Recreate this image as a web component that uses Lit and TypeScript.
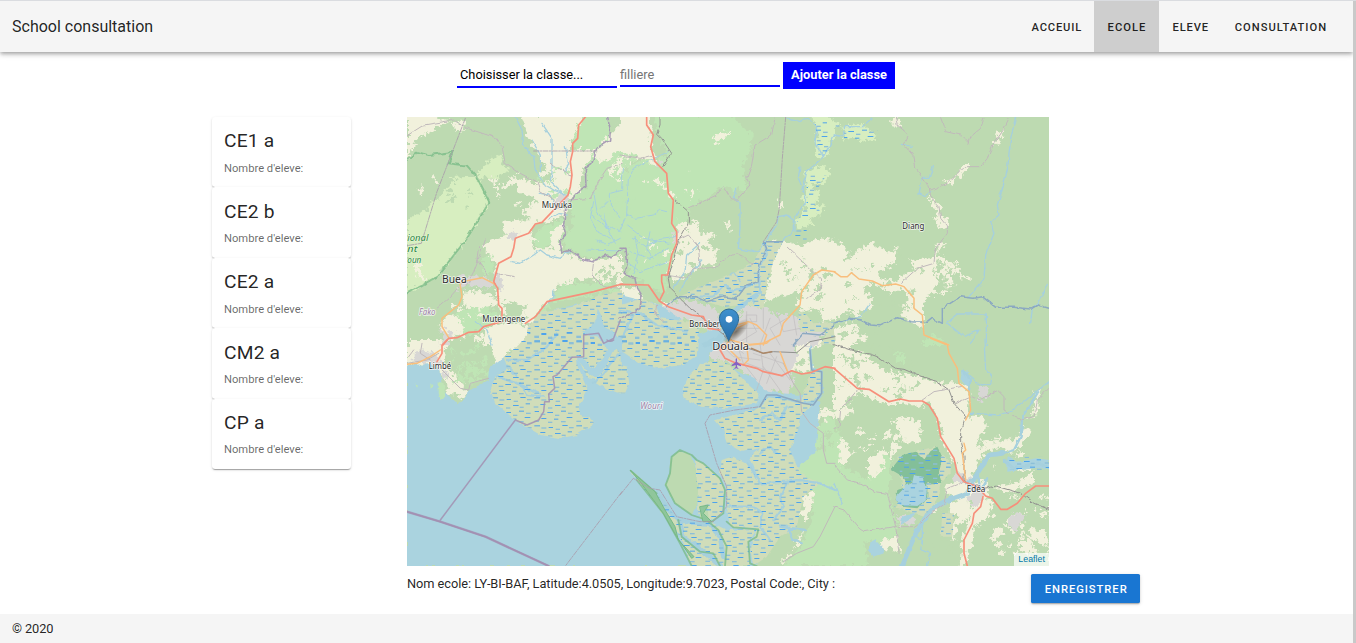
import { LitElement, html, css, svg } from "lit";
import { customElement, property } from "lit/decorators.js";

// Map geometry is expressed in sheets: six survey sheets on one 1935 x 1365 canvas.
type Sheet = "A" | "B" | "C" | "D" | "E" | "F";
const ORIGIN: Record<Sheet, [number, number]> = {
  A: [0, 0], B: [639, 0], C: [1281, 0], D: [0, 675], E: [639, 675], F: [1281, 675],
};
type Shape = [Sheet, string, string];

const land: Shape[] = [
  // light woodland
  ["A", "grass", "M500 0H605L608 70 570 110 500 110ZM535 90L645 70V420L545 430 480 400 465 370 495 330 490 250 540 215ZM400 340L470 310 460 380 400 400 370 380ZM360 620L420 560 470 505 640 500 640 530 430 560 400 620ZM225 430L255 410 262 480 230 480ZM130 610L205 560 270 590 275 620 180 660 130 650Z"],
  ["B", "grass", "M100 0H330L400 60 370 160 380 230 310 215 205 280 205 320 165 330 175 380 145 470 135 540 70 500 25 480 20 400 0 390V180L60 140 145 120 130 90Z"],
  ["E", "grass", "M520 290L600 240 645 230V678H490L540 620 575 540 580 450 520 420Z"],
  ["F", "grass", "M0 270L30 300 25 380 100 420 110 350 150 330 175 360 165 460 190 570 180 600 140 610 90 600 100 678H0ZM180 40L215 40 210 65 185 70ZM160 130L200 110 230 140 180 145Z"],
  ["C", "grass", "M290 660L320 665 340 690H260Z"],
  // heath of the park
  ["A", "heath", "M0 320L20 300 60 290 70 255 100 250 110 220 150 200 120 190 190 185 210 195 247 262 180 370 90 485 0 535ZM230 155L270 120 285 125 280 145 312 165 260 190 200 185Z"],
  ["B", "heath", "M580 0H620L645 20 645 60 630 80 625 120 600 135 585 110 590 60ZM555 170L590 150 630 165 625 195 575 210 600 235 585 270 615 275 600 300 570 310 580 330 530 340 525 315 560 280 545 240 560 215Z"],
  ["C", "heath", "M0 20L20 25 15 40 0 35ZM28 35L60 28 95 32 110 48 130 60 120 75 90 78 60 65 35 75 30 60Z"],
  // cleared ground
  ["A", "field", "M0 0H50L135 18 90 35 25 80 15 105 0 130ZM135 20L175 20 170 45 150 50ZM345 0H525L505 60 495 80 495 105 565 105 530 160 515 235 480 250 475 300 430 318 380 323 350 300 355 280 400 255 330 230 330 200 300 220 280 210 320 190 390 205 440 195 395 120 360 60ZM285 320L375 315 390 330 365 350 395 380 370 380 380 400 440 400 430 350 475 325 455 380 470 415 560 440 645 420V515L580 500 545 490 450 510 430 555 400 580 375 625 350 625 355 600 330 620 360 570 290 560 300 620 280 605 268 500 268 440 230 400 235 385 300 360 290 345ZM105 615L130 600 155 605 170 650 120 665 100 640ZM170 530L210 525 265 545 270 570 210 585 165 570ZM230 640L310 620 375 640 355 690H230L225 660ZM40 205L48 215 45 240 38 240ZM75 180L100 205 95 215 78 195ZM15 430L45 445 35 460 55 495 30 490ZM605 60L645 20V100L640 200 600 180 620 130 580 140 560 120Z"],
  ["B", "field", "M0 0H85L90 30 95 100 110 150 50 130 0 180ZM275 70L300 50 335 55 300 75 290 90ZM175 320L240 330 245 360 275 350 285 360 260 380 290 400 290 450 240 455 200 480 160 500 145 470 160 440 170 400 160 380ZM310 325L330 320 325 350ZM478 255L490 260 485 280 475 278ZM430 380L490 380 540 390 600 370 645 375V610L610 620 600 580 550 590 530 570 540 530 490 540 430 560 450 490ZM0 520L50 515 65 560 20 570 0 560ZM100 570L140 560 200 600 170 610 110 600ZM520 640L570 625 590 660 540 680 510 665Z"],
  ["C", "field", "M0 380L30 390 40 410 60 425 75 400 120 385 165 415 195 395 185 430 170 455 130 465 140 490 190 500 210 480 240 465 230 440 275 430 300 430 310 380 340 390 310 410 310 450 295 480 310 495 300 510 310 540 290 530 270 560 270 610 260 640 200 600 195 580 225 560 205 520 170 535 130 515 110 500 95 535 125 570 85 590 70 580 85 610 30 590 0 625ZM285 240L305 260 325 270 320 290 345 330 330 340 300 315 315 300 290 260ZM185 10L200 25 190 35 165 25ZM488 48L508 45 495 85 475 93 485 70ZM325 200L360 190 385 150 410 150 380 185 350 205ZM330 440L345 435 365 460 350 460ZM335 480L355 480 350 520 335 520ZM370 475L410 485 410 490 385 490ZM0 640L60 625 100 670 70 690 0 690Z"],
  ["D", "field", "M0 0H100L115 20 110 70 125 85 175 145 180 185 150 165 120 160 115 115 90 90 0 75ZM240 0H360L350 20 300 35 290 70 265 75 260 35Z"],
  ["E", "field", "M520 0H620L560 40 580 80 570 95 500 90 520 60 535 40ZM535 200L560 180 600 210 640 205 645 220 590 260 580 290 550 270 560 240 535 225ZM550 470L580 450 575 500 560 540 530 520 550 510ZM490 655L520 625 550 570 540 610 510 640 490 678Z"],
  ["F", "field", "M0 0H40L50 30 100 45 125 70 150 90 190 100 250 110 330 130 370 130 395 130 405 170 400 230 455 230 455 270 430 300 430 320 450 330 425 380 415 430 455 420 465 470 475 510 450 540 420 560 415 610 390 678H380L385 600 400 550 420 490 350 470 330 440 370 420 370 380 320 300 320 260 310 230 290 190 230 200 210 190 160 195 70 160 40 190 60 215 10 240 0 220ZM440 300L480 310 540 300 575 260 590 275 560 320 530 340 500 320 460 330ZM605 150L620 145 610 220 570 240 600 220ZM20 290L50 330 40 370 15 380ZM175 240L215 230 260 250 260 300 245 310 200 290ZM170 300L200 315 190 340 170 330ZM105 350L150 330 145 390 115 420 100 400ZM140 600L190 590 200 640 170 620 130 640ZM350 490L395 470 415 520 370 560 365 600 340 590ZM480 440L540 430 600 400 600 430 520 460ZM475 570L510 560 510 580 480 600ZM550 600L590 600 600 620 580 645 560 630ZM580 560L610 570 640 570 630 620 600 600ZM270 490L320 500 300 520 270 510Z"],
];

const town = [
  ["A", "M155 480L225 485 260 500 250 525 190 510 155 525ZM300 355L335 350 330 372 300 375ZM262 470L285 500 290 525 268 515ZM455 235L485 240 470 285 440 280ZM100 640L135 655 130 690H105ZM360 625L390 640 388 655 365 645Z"],
  ["B", "M110 580L180 555 260 570 305 600 300 640 275 650 230 620 165 605 110 605ZM355 600L370 575 420 570 470 600 520 600 560 635 600 625 615 650 590 690H300L330 670ZM95 90L105 130 125 150 110 155ZM160 350L175 345 170 390 158 385Z"],
  ["D", "M20 35L55 30 95 50 110 75 90 80 50 65 20 70ZM105 90L120 95 125 120 110 110Z"],
  ["E", "M300 0H520L530 70 510 95 525 130 500 165 470 150 440 160 420 165 385 145 400 120 370 100 350 80 310 60 260 55 270 35Z"],
  ["F", "M358 400L385 400 430 430 445 440 450 475 425 505 400 480 415 460 395 430 355 430ZM430 145L455 138 470 155 460 175 430 185 440 165ZM190 525L215 530 240 530 245 545 215 555 190 550ZM525 535L550 515 575 525 545 575 525 560Z"],
] as [Sheet, string][];

const sea = "M0 750L70 748 100 765 105 825 155 868 190 825 245 795 250 760 265 745 300 720 360 690 380 640 410 590 640 540 760 570 880 655 925 640 965 660 945 690 905 720 900 760 960 750 1040 790 1080 830 1180 840 1240 860 1225 1010 1100 1130 1050 1353H0Z";

const marsh: Shape[] = [
  ["A", "marsh", "M360 645L400 590 500 575 600 535 645 528V690H360Z"],
  ["B", "marsh", "M0 570L70 550 110 575 120 610 210 620 240 645 220 690H0ZM180 545L230 520 330 480 400 445 430 380 490 378 460 440 440 510 430 580 370 570 310 575 260 560ZM535 590L560 600 580 625 640 620 645 690H600L620 650 540 650Z"],
  ["D", "marsh", "M365 -20L640 -20 645 0 600 -10 640 40 645 160 600 150 570 130 560 115 540 110 510 50 512 80 542 150 515 200 520 225 545 230 562 250 510 285 460 295 400 285 325 240 265 190 250 150 265 110 300 85 290 50 330 20Z"],
  ["E", "marsh", "M0 -10H235L230 50 190 75 110 85 60 70 30 50 0 30ZM0 75L20 80 28 130 15 160 0 160ZM240 75L300 60 330 75 380 130 420 165 410 190 320 205 240 200 190 175 187 150 205 110ZM285 240L400 210 425 200 440 165 545 180 575 95 605 95 605 160 560 210 540 230 535 270 510 330 540 400 600 430 550 470 530 560 480 590 440 650 400 678 390 620 415 565 330 560 320 500 320 440 300 400 305 360 340 350 385 375 420 430 390 350 420 325 365 335 320 310 310 270ZM32 392L60 415 110 460 175 540 270 545 320 570 410 568 385 610 390 678H215L180 590 130 520 50 420Z"],
  ["E", "marsh", "M225 360L260 375 298 415 313 450 308 520 275 540 235 520Z"],
  ["F", "marsh", "M190 350L300 320 350 370 350 400 320 430 310 480 270 530 180 500 210 470ZM325 520L360 520 355 590 320 590Z"],
];

const waters: Shape[] = [
  ["A", "w3", "M325 6L345 45 350 90 380 125 385 165 415 210 440 225 475 240M405 25L435 70 435 175 430 200 470 240M375 75L400 120 400 170M475 95L485 150 470 170M315 440L340 445 380 420 400 405 420 420 460 430 490 405M410 575L440 550 440 525M205 620L240 645 255 690M425 312L455 295 480 300M400 235L425 240 440 260"],
  ["A", "w2", "M560 230L570 290 600 330 640 350M555 300L600 340 625 385M560 260L550 310 570 350 610 370M570 375L600 390 640 370M540 405L645 408M645 225L610 235 610 270 640 310M580 280L600 260"],
  ["B", "w2", "M145 110L80 140 40 160 25 190 20 300 45 310 100 300 120 285 140 290M20 330L70 370 150 385M40 370L75 395 120 370 165 365M30 410L90 430 145 400M20 440L60 470 140 440M45 365L55 420 40 475M90 350L80 400 100 430M10 160L5 220M0 345L20 300"],
  ["B", "w3", "M350 220L340 250 360 265 360 340 355 400 400 410 420 405 435 380 470 330 475 305 500 300 520 315 520 345 490 380 465 380M645 60L610 125 560 170 550 220 555 260 525 310 525 350M540 155L535 190 550 225M240 385L200 420 195 470 160 520M245 435L200 490 180 530M360 500L340 470 330 480M500 6L540 20 560 8 590 35 585 80 610 125"],
  ["B", "w6", "M435 380L440 420 415 460 420 530 400 560M225 545L280 545 315 510 340 530 420 500M0 585L60 595 110 630 200 650M40 600L10 660"],
  ["B", "w16", "M255 690L300 670 340 590 410 540"],
  ["C", "w3", "M545 6L530 70 520 165 505 220 490 270 495 300 470 320 480 355 455 420 450 490 440 505 405 545M298 155L285 190 265 190 255 235 270 245 290 230M205 88L235 95M640 505L620 550 595 580 590 625M340 620L370 597H457V690M340 625L390 665 435 645 410 685M0 625L80 605 105 570"],
  ["C", "w3", "M0 60L30 65 28 35 85 35 115 8"],
  ["D", "w6", "M300 60L360 60 420 20 450 -20M270 110L330 130 400 160M300 80L330 110M640 40L610 70 590 100 560 130M340 130L360 165 410 170"],
  ["E", "w6", "M400 210L445 165 480 170 545 190 585 185 605 160V95L575 85 570 20M385 370L420 430 500 425 540 420 600 430 645 450M420 240L455 220 480 240 500 200M420 340L450 320 470 340M325 500L400 500 430 520 420 560 450 600M500 430L480 470 490 500 460 540M480 560L555 570M500 560L520 600 545 610"],
  ["E", "w16", "M110 460L140 505 180 545 190 590 250 635 300 678M180 545L265 550 300 590 310 650"],
  ["F", "w3", "M450 0L455 90 475 110 470 130 440 135 400 100M410 220L500 225 545 205 645 125M240 590L265 600 260 630 290 640 280 678M0 430L25 490M265 560L265 610"],
  ["F", "w16", "M205 678L230 615 250 570 290 510 330 485 400 460 430 400 465 345 505 340"],
  ["F", "w6", "M505 340L540 330 560 290 565 230 610 160M510 360L540 385 620 370 645 385M385 90L410 120 405 150M395 430L430 400 440 450 460 415"],
];

const lakes: Shape[] = [
  ["A", "sea", "M590 290L600 330 610 345 595 340Z"],
  ["F", "reserve", "M205 345L245 335 270 360 290 330 310 320 325 350 315 400 325 430 280 430 280 475 250 505 205 500 185 480 190 450 220 440 205 410 170 390Z"],
  ["F", "sea", "M215 435L235 425 240 405 265 410 270 430 280 440 275 480 250 498 195 495 185 470 205 450ZM110 605L125 598 145 620 150 640 120 650 105 635ZM380 90L400 95 410 110 405 140 385 130ZM205 530L250 515 225 540 200 555ZM520 350L550 365 610 355 645 360V385L600 385 560 390 520 395Z"],
  ["E", "wood", "M180 330L215 345 225 380 235 450 230 500 215 525 165 490 137 435 150 400 155 350ZM240 500L265 500 270 540 240 540Z"],
];

// Open lagoon inside the reed beds, free of reed marks.
const lagoons: Shape[] = [
  ["A", "sea", "M572 580L582 600 590 635 620 650 640 672 645 690H590L575 665 545 660 525 650 555 635 568 610Z"],
  ["D", "sea", "M590 0L645 -5V40L625 25 610 55 590 90 570 115 545 100 512 60 512 45 535 60 555 85 585 60 600 30Z"],
];

const lines: Shape[] = [
  ["A", "reserve-line", "M0 135L15 128 28 110 65 120 137 111 125 145 180 152 208 184 247 262 180 370 90 485 0 535"],
  ["E", "reserve-line", "M180 330L215 345 230 360 250 370 300 415 315 450 310 520 275 545 215 525 165 490 137 435 150 400 155 350ZM32 392L110 460M50 420L130 520 180 610 215 678M175 540L185 590 240 635 280 640 300 678M265 545L295 570 320 620 315 678M320 545L340 562 415 568 410 590 385 605 390 670 410 678"],
  ["E", "fill-line", "M32 392L50 408 105 455 135 510 165 560 175 600 222 650 215 655 170 590 130 520 60 425ZM240 500L265 495 250 520 275 545 250 545Z"],
  ["A", "track", "M0 62L50 30 140 15 175 38 265 68 285 95 295 145 345 178 390 200 400 230 450 260M490 255L550 250 580 190 600 160 645 145M235 375L200 470 180 510M215 395L210 430 240 480M265 475L325 485M165 505L130 545 90 580M560 440L555 480 590 515 640 520M430 145L490 180"],
  ["B", "track", "M0 120L60 130 100 120M465 8L455 60 405 90 395 150 380 190 390 210 350 255 335 255 310 215 290 240 205 280M135 480L200 490 220 460 290 458 300 440 350 415 370 425 395 450 415 440M175 375L205 360 235 395 240 450M500 395L590 480 605 495 600 525 560 550M110 570L105 600 130 620"],
  ["C", "track", "M185 6L190 30 225 60 210 90 240 125 245 160 285 215 290 245 315 275 320 310 340 335 340 355 305 400 300 445 250 460 200 505M290 225L340 205 390 155 440 155 460 130 480 85 505 50 525 10M320 8L335 50 380 60 405 85 410 65 440 40 450 10"],
  ["D", "track", "M0 70L60 60 95 40M70 60L40 40 45 10M105 90L160 145 185 150 190 130 245 115M20 30L5 50"],
  ["E", "track", "M490 70L520 130 540 160 545 215 570 250 610 280 610 330 620 370 645 370M645 500L600 590 580 620 530 640 490 665"],
  ["F", "track", "M0 265L15 260 20 210 70 150M0 375L40 420 80 430 120 455 160 460 185 560 240 560 260 545M0 500L30 510 75 565 90 575 180 560M185 560L195 640M265 180L300 155 380 140M365 190L410 170 440 180 490 150 510 170 510 210 560 240 600 230 610 180 645 145M260 550L290 520 330 490 340 445 390 425"],
  ["B", "street", "M380 600H410V620H380ZM430 580V640M450 610L420 690M500 610L450 640 480 690M390 610L410 650 360 680M470 590L490 650 540 640M520 600L530 660M355 640L420 640M380 590V680"],
  ["E", "street", "M310 20L340 50 420 60M350 10L370 70 410 120M400 40L490 70M420 10L430 90 410 150M450 40L510 120M470 50L440 130M380 70L490 110M430 80L480 150M320 0L370 40"],
  ["B", "rail", "M120 6V30L110 55 125 70 155 115 125 160M160 250L205 290 205 325 175 380 145 490 150 520 210 580 300 650 350 690"],
  ["E", "rail", "M385 25L430 40 460 35 530 38 570 5 645 -10"],
  ["F", "rail", "M0 14L50 30 110 43 130 50 185 85 210 88 250 105 310 125 345 150 360 190 395 230 380 280 380 310 390 350 390 425 450 445 485 438 560 460 600 490 645 508"],
  ["A", "border-dash", "M175 10L90 230 43 385 0 392M380 108H570"],
  ["B", "border-dash", "M497 6L487 130 478 280 470 320 430 380"],
  ["A", "border", "M602 6L610 45 608 75 570 100 555 145 535 160 537 215 505 238 490 265 475 285 470 330 478 355 458 375 465 412 490 405 530 435 555 440 600 420 610 430 645 405"],
  ["B", "border", "M0 400L18 400 22 440 15 480 45 490 50 520 65 545 60 580 45 590 0 610"],
  ["B", "border-soft", "M140 575L170 545 225 545 260 560 310 545 350 550 380 510 415 500 415 460 440 400 430 380 490 380M520 690L550 655 600 660 645 630"],
  ["C", "border-soft", "M0 625L50 610 80 615 110 630 140 632 190 608 230 620 280 622 295 610 325 625 325 580 380 545 420 550 445 545 485 577 540 577 590 582 610 570 645 580"],
  ["D", "border", "M640 -60L620 -5 590 10 575 -20 530 -15V50L495 52 450 105 438 110 443 145 425 162 427 185 413 185 410 215 395 240 360 255 325 240 100 540M0 515L100 545 235 590 425 678M600 0Q610 8 620 0"],
  ["D", "thick-border", "M0 515L100 545 235 590 425 678"],
  ["D", "border-dash", "M645 455L475 678"],
  ["E", "border-dash", "M0 465L40 415 90 445 120 450 170 530 240 545 280 545 320 500V440L290 370 255 250 270 225 345 210 420 200 440 165"],
  ["E", "border-soft", "M420 200L440 165 470 165 550 190 580 195 605 160V95L575 90 570 30"],
];

const roads: Shape[] = [
  ["A", "orange", "M165 500L225 488 265 508M158 500L165 545 155 570 105 610 105 635 125 668"],
  ["B", "orange", "M325 680L350 630 385 620 410 630 440 660 430 690M370 690L430 685 480 660 490 625 540 570 545 530 580 480 605 465 645 470M330 650L380 625"],
  ["C", "orange", "M0 470L20 485 40 485 52 473 75 492 115 498 145 512 185 507 210 515 240 550 240 580 265 600 270 660 345 690"],
  ["D", "orange", "M0 73L30 70 70 50 100 30"],
  ["E", "orange", "M305 30L330 0 390 15 440 10 450 0M380 15L385 60 370 75M480 35L503 95M320 20L360 60"],
  ["F", "orange", "M290 -5L340 15 345 40 370 85 375 130 405 155 410 210 395 240M390 310L395 330 385 340 395 420"],
  ["A", "trunk", "M535 6L515 30 512 70 497 85 497 110 490 140 495 180 490 215 483 240 405 322 385 327 365 355 325 370 320 400 312 425 275 445 260 500 272 520 275 570 285 580 285 605M285 620L230 635 215 650 185 652 150 668 125 670 108 690M355 625L385 605 420 560 560 530 645 507"],
  ["B", "trunk", "M80 6V30L100 60 92 95 105 140 140 175 145 235 160 255 155 325 170 350 170 385 155 420 143 480 125 480 125 500 132 530 118 558 145 575 215 600 250 605 265 640 300 645M0 508L85 510 118 558"],
  ["D", "trunk", "M120 0L105 15 105 40 90 65"],
  ["E", "trunk", "M310 12L300 30 315 55 345 68 410 85 430 95 485 107 515 92 545 102 575 97 615 80 645 85"],
  ["F", "trunk", "M0 85L70 145 105 148 165 185 200 177 225 183 265 183 285 195 310 235 320 290 360 355 370 400 390 425 430 440 455 468 475 475 500 508 520 508 550 490 575 460 605 438 645 438M447 470L440 500 420 520 415 550 390 600 390 640 400 678"],
  ["E", "brown", "M395 25L430 40 455 35"],
];

const labels: [Sheet, number, number, number, number, string, string][] = [
  ["A", 404, 278, 91, 28, "town", "Muyuka"],
  ["A", 105, 505, 74, 33, "town", "Buea"],
  ["A", 226, 621, 129, 28, "town", "Mutengene"],
  ["A", 36, 600, 49, 25, "region", "Fako"],
  ["A", 1, 377, 63, 27, "park", "ional"],
  ["A", 1, 411, 30, 27, "park", "nt"],
  ["A", 1, 445, 42, 27, "park", "oun"],
  ["B", 208, 636, 98, 27, "town", "Bonaberi"],
  ["C", 205, 342, 66, 27, "town", "Diang"],
  ["D", 65, 87, 67, 27, "town", "Limbé"],
  ["E", 277, 30, 110, 35, "town", "Douala"],
  ["E", 61, 207, 66, 25, "region", "Wouri"],
  ["F", 398, 457, 56, 27, "town", "Edéa"],
];

// Scattered clearings and thickets: [x, y, width, height, count, class]
const scatter: [number, number, number, number, number, string][] = [
  [600, 110, 70, 230, 70, "grass"], [1310, 400, 230, 200, 34, "wood"], [1290, 700, 240, 210, 48, "wood"],
  [1290, 620, 120, 130, 18, "wood"], [1560, 420, 90, 110, 22, "field"], [1740, 1090, 190, 240, 42, "field"],
  [1560, 1210, 90, 130, 12, "wood"], [800, 320, 150, 130, 16, "wood"], [130, 690, 110, 110, 34, "grass"],
  [1120, 430, 130, 130, 20, "wood"], [1160, 740, 90, 90, 16, "wood"], [380, 140, 100, 110, 12, "grass"],
  [250, 170, 160, 130, 16, "field"], [1650, 960, 240, 100, 16, "field"], [560, 450, 90, 100, 20, "wood"],
  [1170, 860, 110, 140, 20, "wood"], [1290, 950, 230, 90, 16, "field"], [690, 160, 180, 300, 18, "field"],
  [100, 560, 120, 110, 14, "field"], [0, 190, 180, 130, 8, "wood"],
];

function scatterPaths() {
  let seed = 20;
  const rnd = () => (seed = (seed * 16807) % 2147483647) / 2147483647;
  return scatter.map(([x, y, w, h, n, cls]) => {
    let d = "";
    for (let i = 0; i < n; i++) {
      const cx = x + rnd() * w, cy = y + rnd() * h, r = 3 + rnd() * 8;
      d += `M${cx.toFixed(0)} ${cy.toFixed(0)}l${(r * 1.3).toFixed(0)} ${(-r).toFixed(0)} ${r.toFixed(0)} ${(r * 0.6).toFixed(0)} ${(-r * 0.4).toFixed(0)} ${r.toFixed(0)} ${(-r * 1.2).toFixed(0)} ${(r * 0.5).toFixed(0)}z`;
    }
    return svg`<path class=${cls} d=${d}></path>`;
  });
}

const place = (s: Sheet) => `translate(${ORIGIN[s][0]} ${ORIGIN[s][1]})`;
const draw = (list: Shape[]) =>
  list.map(([s, cls, d]) => svg`<path class=${cls} transform=${place(s)} d=${d}></path>`);

@customElement("region-map")
class RegionMap extends LitElement {
  static styles = css`
    :host { display: block; position: relative; width: 642px; height: 449px; overflow: hidden; }
    svg { display: block; width: 642px; height: 449px; background: #bddab1; }
    path { fill: none; stroke-linejoin: round; stroke-linecap: round; }
    .wood { fill: #bddab1; }
    .grass { fill: #bfe5b5; }
    .heath { fill: #d7eec0; }
    .field { fill: #f1f1dc; }
    .built { fill: #d8d7d5; }
    .sea { fill: #aad3df; }
    .marsh { fill: #d0ddba; }
    .dashes { fill: url(#reeds); }
    .reserve { fill: #83bf99; }
    .w2, .w3, .w6, .w16 { stroke: #a6d0dd; stroke-width: 3; }
    .w3 { stroke-width: 4; }
    .w6 { stroke-width: 7; }
    .w16 { stroke-width: 14; }
    .reserve-line { stroke: #77b985; stroke-width: 5.5; opacity: .75; }
    .fill-line { fill: #8fc69b; stroke: #77b985; stroke-width: 3; }
    .track { stroke: #c0b9bb; stroke-width: 3; }
    .street { stroke: #bfbdbe; stroke-width: 2; }
    .rail { stroke: #929290; stroke-width: 3; }
    .border { stroke: #a394b4; stroke-width: 4.5; opacity: .9; }
    .thick-border { stroke: #a28baf; stroke-width: 7; opacity: .7; }
    .border-soft { stroke: #8ca9c1; stroke-width: 4.5; }
    .border-dash { stroke: #a99bab; stroke-width: 2.5; stroke-dasharray: 15 4 5 4; }
    .trunk { stroke: #f78f7b; stroke-width: 5; }
    .orange { stroke: #f9be7c; stroke-width: 4.4; }
    .brown { stroke: #ad8867; stroke-width: 4.4; }
    text { font-family: "Noto Sans", sans-serif; paint-order: stroke; stroke: rgba(255,255,255,.75); stroke-width: 5px; stroke-linejoin: round; }
    .town { fill: #2b2b2b; }
    .region { fill: #9c82a8; font-style: italic; }
    .park { fill: #278539; font-style: italic; stroke-width: 2px; }
    .plane { fill: #8461c4; }
    .pin { fill: url(#pin-blue); stroke: #2e6c97; stroke-width: 3; }
    .pin-shadow { fill: url(#shade); }
    .eye { fill: #fff; }
    .credit {
      position: absolute; right: 0; bottom: 0; padding: 0 4px; letter-spacing: .04px;
      font: 8.8px/13px "Liberation Sans", sans-serif; color: #0078a8; background: rgba(255,255,255,.7);
    }
  `;

  render() {
    return html`
      <svg viewBox="0 6 1926 1347" role="img" aria-label="Douala">
        <defs>
          <filter id="rough" x="0" y="0" width="1" height="1" filterUnits="objectBoundingBox">
            <feTurbulence type="fractalNoise" baseFrequency="0.07" numOctaves="3" seed="4"></feTurbulence>
            <feDisplacementMap in="SourceGraphic" scale="34" xChannelSelector="R" yChannelSelector="G"></feDisplacementMap>
          </filter>
          <filter id="wiggle" x="0" y="0" width="1" height="1">
            <feTurbulence type="fractalNoise" baseFrequency="0.05" numOctaves="2" seed="9"></feTurbulence>
            <feDisplacementMap in="SourceGraphic" scale="12" xChannelSelector="R" yChannelSelector="G"></feDisplacementMap>
          </filter>
          <pattern id="reeds" width="126" height="84" patternUnits="userSpaceOnUse">
            <g fill="#4da3ec">
              <rect x="4" y="4" width="17" height="3"></rect><rect x="47" y="9" width="13" height="3"></rect>
              <rect x="88" y="3" width="16" height="3"></rect><rect x="22" y="24" width="15" height="3"></rect>
              <rect x="66" y="27" width="17" height="3"></rect><rect x="104" y="22" width="13" height="3"></rect>
              <rect x="5" y="45" width="13" height="3"></rect><rect x="43" y="48" width="17" height="3"></rect>
              <rect x="84" y="44" width="15" height="3"></rect><rect x="25" y="66" width="15" height="3"></rect>
              <rect x="63" y="68" width="13" height="3"></rect><rect x="101" y="63" width="17" height="3"></rect>
            </g>
            <g fill="#8cbfd8">
              <rect x="25" y="10" width="15" height="4"></rect><rect x="68" y="14" width="13" height="4"></rect>
              <rect x="108" y="9" width="14" height="4"></rect><rect x="2" y="31" width="14" height="4"></rect>
              <rect x="45" y="34" width="13" height="4"></rect><rect x="86" y="32" width="12" height="4"></rect>
              <rect x="23" y="53" width="14" height="4"></rect><rect x="66" y="56" width="13" height="4"></rect>
              <rect x="105" y="50" width="14" height="4"></rect><rect x="4" y="74" width="14" height="4"></rect>
              <rect x="45" y="77" width="13" height="4"></rect><rect x="84" y="75" width="14" height="4"></rect>
            </g>
          </pattern>
          <linearGradient id="pin-blue" x1="0" y1="0" x2="0" y2="1">
            <stop offset="0" stop-color="#3f91cf"></stop><stop offset="1" stop-color="#286fa8"></stop>
          </linearGradient>
          <radialGradient id="shade">
            <stop offset="0" stop-color="#2e2418" stop-opacity=".6"></stop>
            <stop offset="1" stop-color="#2e2418" stop-opacity="0"></stop>
          </radialGradient>
        </defs>
        <g filter="url(#rough)">
          <rect x="-40" y="-40" width="2030" height="1460" class="wood"></rect>
          ${draw(land)}
          ${scatterPaths()}
          ${town.map(([s, d]) => svg`<path class="built" transform=${place(s)} d=${d}></path>`)}
        </g>
        <g filter="url(#wiggle)">
          <rect x="-40" y="-40" width="2030" height="1460" fill="none"></rect>
          <path class="sea" d=${sea}></path>
          <path class="grass" d="M95 800l15 5 5 40-15 10-5-20zM25 808l8 4-3 6zM70 805l7 8-6 6z"></path>
          ${draw(marsh)}
          ${draw(lakes)}
          ${draw(waters)}
        </g>
        ${draw(marsh.map(([s, , d]) => [s, "dashes", d] as Shape))}
        <path class="dashes" transform=${place("B")} d="M585 20H625V120H595ZM560 180L620 180 580 240 600 290 530 320 560 270ZM525 345H560V375H525Z"></path>
        <path class="dashes" transform=${place("C")} d="M5 30H28V40H5ZM30 40H130V75H30Z"></path>
        <path class="dashes" transform=${place("F")} d="M525 350H645V390H525Z"></path>
        <g filter="url(#wiggle)">
          <rect x="-40" y="-40" width="2030" height="1460" fill="none"></rect>
          ${draw(lagoons)}
          ${draw(lines.filter((l) => !["D", "E"].includes(l[0]) && l[1] !== "border-dash" && l[1] !== "street"))}
        </g>
        ${draw(lines.filter((l) => ["D", "E"].includes(l[0]) || l[1] === "border-dash" || l[1] === "street"))}
        ${draw(roads)}
        ${labels.map(([s, x, y, w, size, cls, t]) => svg`
          <text class=${cls} x=${ORIGIN[s][0] + x} y=${ORIGIN[s][1] + y} font-size=${size}
            textLength=${w} lengthAdjust="spacingAndGlyphs">${t}</text>`)}
        <path class="plane" transform="translate(988 746)" d="M-2-14L0-17 2-14V-5L14 4V8L2 4V10L6 14V16L0 14-6 16V14L-2 10V4L-14 8V4L-2-5Z"></path>
        <ellipse class="pin-shadow" cx="987" cy="650" rx="52" ry="20" transform="rotate(-43 987 650)"></ellipse>
        <path class="pin" d="M965 678C955 648 937 632 937 611A29 29 0 0 1 995 611C995 632 976 648 965 678Z"></path>
        <circle class="eye" cx="966" cy="613" r="10"></circle>
      </svg>
      <span class="credit">Leaflet</span>
    `;
  }
}

@customElement("class-card")
class ClassCard extends LitElement {
  @property() name = "";
  static styles = css`
    :host {
      display: block; box-sizing: border-box; height: 70.4px; padding: 11.4px 12px 0; background: #fff;
      border-radius: 3.2px;
      box-shadow: 0 2px 1px -1px rgba(0,0,0,.2), 0 1px 1px rgba(0,0,0,.14), 0 1px 3px rgba(0,0,0,.12);
    }
    .name { font-size: 19.2px; line-height: 25.6px; letter-spacing: .2px; color: rgba(0,0,0,.87); }
    .count { margin-top: 5.9px; font-size: 11.2px; line-height: 17.6px; color: rgba(0,0,0,.6); }
  `;
  render() {
    return html`<div class="name">${this.name}</div><div class="count">Nombre d'eleve:</div>`;
  }
}

@customElement("app-root")
class AppRoot extends LitElement {
  static styles = css`
    :host {
      display: grid; grid-template-columns: 1353px 3px; width: 1356px; height: 643px; box-sizing: border-box;
      border-top: 1px solid #dadce0; background: #fff; overflow: hidden;
      font-family: Roboto, sans-serif; color: rgba(0,0,0,.87);
    }
    .page { display: flex; flex-direction: column; }
    .scroll { background: #c9c9c9; position: relative; z-index: 1; }
    .bar {
      display: flex; justify-content: space-between; align-items: center; height: 51px; padding-left: 12px;
      background: #f5f5f5; flex: none;
      box-shadow: 0 1.6px 3.2px -.8px rgba(0,0,0,.2), 0 3.2px 4px rgba(0,0,0,.14), 0 .8px 8px rgba(0,0,0,.12);
    }
    .title { font-size: 16px; }
    .nav { display: grid; grid-template-columns: 76px 65px 63px 118px; align-self: stretch; padding-right: 13px; }
    .tab {
      display: flex; align-items: center; padding: 2px 0 0 13.6px; font-size: 11.2px; font-weight: 500;
      letter-spacing: .8px;
    }
    .tab:last-child { padding-left: 12.8px; letter-spacing: 1px; }
    .active { background: #cecece; letter-spacing: 1px; }
    .form { display: flex; gap: 3px; margin: 10px 0 0 457px; height: 27px; font-size: 12.8px; }
    .field { box-sizing: border-box; width: 160px; height: 26px; border-bottom: 2px solid #00f; line-height: 26px; padding-left: 3px; color: #000; }
    .entry { height: 25px; padding-left: 0; color: #757575; }
    .add { width: 112px; background: #00f; color: #fff; font-weight: 700; text-align: center; line-height: 26px; }
    .content { display: flex; margin: 28px 0 0 212px; height: 497px; }
    .classes { width: 139px; margin-right: 56px; }
    .save-row { display: flex; width: 733px; padding-top: 8px; justify-content: space-between; }
    .info { font-size: 12.8px; line-height: 20px; letter-spacing: -.05px; }
    .save {
      width: 109px; height: 29px; line-height: 31px; border-radius: 1.6px; background: #1976d2; color: #fff;
      font-size: 11.2px; font-weight: 500; letter-spacing: .95px; text-indent: 1.4px; text-align: center;
      box-shadow: 0 2px 1.6px -1px rgba(0,0,0,.2), 0 1px 1.6px rgba(0,0,0,.14), 0 1px 4px rgba(0,0,0,.12);
    }
    .foot { height: 29px; padding-left: 12px; background: #f5f5f5; font-size: 12.8px; line-height: 29px; letter-spacing: -.1px; }
  `;

  render() {
    return html`
      <div class="page">
        <header class="bar">
          <span class="title">School consultation</span>
          <nav class="nav">
            ${["ACCEUIL", "ECOLE", "ELEVE", "CONSULTATION"].map(
              (t) => html`<span class="tab ${t === "ECOLE" ? "active" : ""}">${t}</span>`
            )}
          </nav>
        </header>
        <div class="form">
          <div class="field">Choisisser la classe...</div>
          <div class="field entry">filliere</div>
          <div class="add">Ajouter la classe</div>
        </div>
        <main class="content">
          <div class="classes">
            ${["CE1 a", "CE2 b", "CE2 a", "CM2 a", "CP a"].map((n) => html`<class-card name=${n}></class-card>`)}
          </div>
          <section>
            <region-map></region-map>
            <div class="save-row">
              <div class="info">Nom ecole: LY-BI-BAF, Latitude:4.0505, Longitude:9.7023, Postal Code:, City :</div>
              <div class="save">ENREGISTRER</div>
            </div>
          </section>
        </main>
        <footer class="foot">© 2020</footer>
      </div>
      <div class="scroll"></div>
    `;
  }
}
